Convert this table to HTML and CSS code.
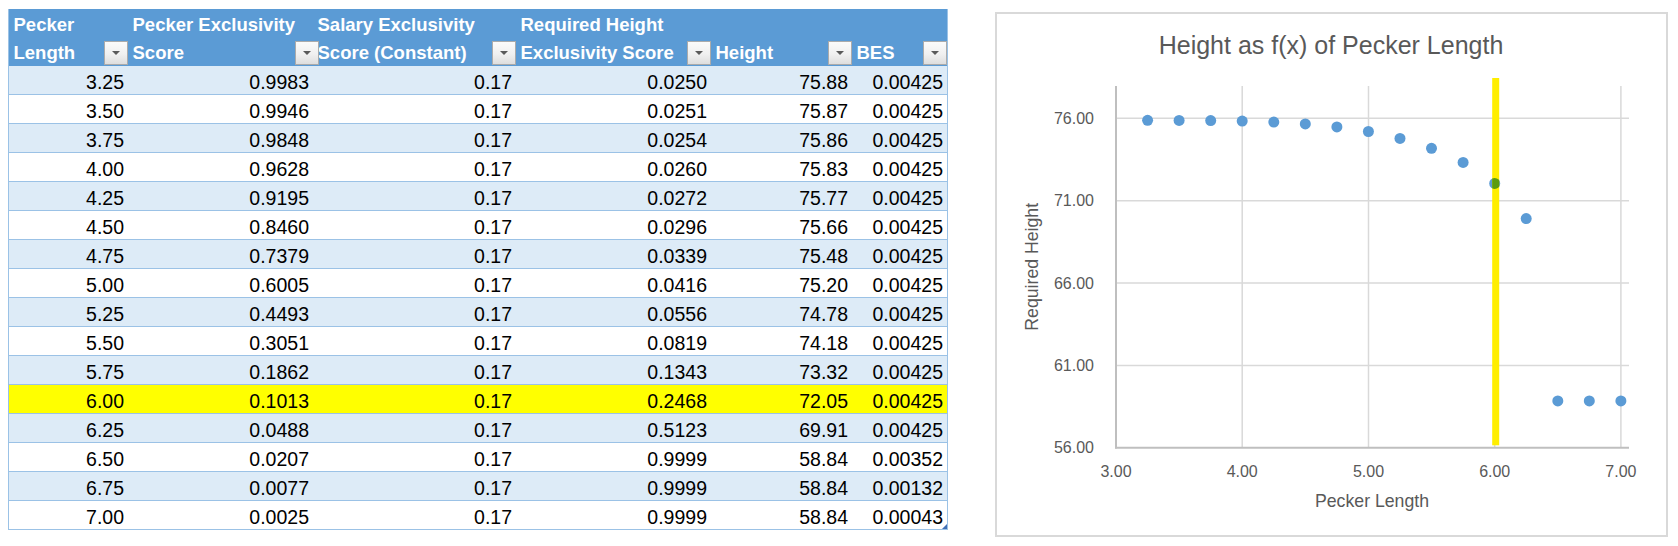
FILE: index.html
```html
<!DOCTYPE html>
<html lang="en">
<head>
<meta charset="utf-8">
<title>Height as f(x) of Pecker Length</title>
<link rel="stylesheet" href="styles.css">
</head>
<body>
<div class="page">
  <div class="sheet">
    <table class="tbl">
      <colgroup>
        <col class="c1"><col class="c2"><col class="c3"><col class="c4"><col class="c5"><col class="c6">
      </colgroup>
      <thead>
        <tr>
          <th><div class="hcell"><span class="hlabel">Pecker<br>Length</span><span class="fbtn"></span></div></th>
          <th><div class="hcell"><span class="hlabel">Pecker Exclusivity<br>Score</span><span class="fbtn"></span></div></th>
          <th><div class="hcell"><span class="hlabel">Salary Exclusivity<br>Score (Constant)</span><span class="fbtn"></span></div></th>
          <th><div class="hcell"><span class="hlabel">Required Height<br>Exclusivity Score</span><span class="fbtn"></span></div></th>
          <th><div class="hcell"><span class="hlabel">Height</span><span class="fbtn"></span></div></th>
          <th><div class="hcell"><span class="hlabel">BES</span><span class="fbtn"></span></div></th>
        </tr>
      </thead>
      <tbody>
        <tr class="band"><td>3.25</td><td>0.9983</td><td>0.17</td><td>0.0250</td><td>75.88</td><td>0.00425</td></tr>
        <tr><td>3.50</td><td>0.9946</td><td>0.17</td><td>0.0251</td><td>75.87</td><td>0.00425</td></tr>
        <tr class="band"><td>3.75</td><td>0.9848</td><td>0.17</td><td>0.0254</td><td>75.86</td><td>0.00425</td></tr>
        <tr><td>4.00</td><td>0.9628</td><td>0.17</td><td>0.0260</td><td>75.83</td><td>0.00425</td></tr>
        <tr class="band"><td>4.25</td><td>0.9195</td><td>0.17</td><td>0.0272</td><td>75.77</td><td>0.00425</td></tr>
        <tr><td>4.50</td><td>0.8460</td><td>0.17</td><td>0.0296</td><td>75.66</td><td>0.00425</td></tr>
        <tr class="band"><td>4.75</td><td>0.7379</td><td>0.17</td><td>0.0339</td><td>75.48</td><td>0.00425</td></tr>
        <tr><td>5.00</td><td>0.6005</td><td>0.17</td><td>0.0416</td><td>75.20</td><td>0.00425</td></tr>
        <tr class="band"><td>5.25</td><td>0.4493</td><td>0.17</td><td>0.0556</td><td>74.78</td><td>0.00425</td></tr>
        <tr><td>5.50</td><td>0.3051</td><td>0.17</td><td>0.0819</td><td>74.18</td><td>0.00425</td></tr>
        <tr class="band"><td>5.75</td><td>0.1862</td><td>0.17</td><td>0.1343</td><td>73.32</td><td>0.00425</td></tr>
        <tr class="hl"><td>6.00</td><td>0.1013</td><td>0.17</td><td>0.2468</td><td>72.05</td><td>0.00425</td></tr>
        <tr class="band"><td>6.25</td><td>0.0488</td><td>0.17</td><td>0.5123</td><td>69.91</td><td>0.00425</td></tr>
        <tr><td>6.50</td><td>0.0207</td><td>0.17</td><td>0.9999</td><td>58.84</td><td>0.00352</td></tr>
        <tr class="band"><td>6.75</td><td>0.0077</td><td>0.17</td><td>0.9999</td><td>58.84</td><td>0.00132</td></tr>
        <tr><td>7.00</td><td>0.0025</td><td>0.17</td><td>0.9999</td><td>58.84</td><td>0.00043</td></tr>
      </tbody>
    </table>
    <span class="handle"></span>
  </div>

  <div class="chart">
    <svg class="plot" width="669" height="521" viewBox="997 14 669 521" xmlns="http://www.w3.org/2000/svg">
      <defs>
        <clipPath id="hlclip"><rect x="1492.2" y="78" width="7" height="367.3"/></clipPath>
      </defs>
      <text class="ctitle" x="1331" y="54.3" text-anchor="middle">Height as f(x) of Pecker Length</text>

      <g class="grid">
        <line x1="1116" y1="118.3" x2="1629" y2="118.3"/>
        <line x1="1116" y1="200.7" x2="1629" y2="200.7"/>
        <line x1="1116" y1="283" x2="1629" y2="283"/>
        <line x1="1116" y1="365.4" x2="1629" y2="365.4"/>
        <line x1="1242.2" y1="86" x2="1242.2" y2="447.7"/>
        <line x1="1368.5" y1="86" x2="1368.5" y2="447.7"/>
        <line x1="1494.7" y1="86" x2="1494.7" y2="447.7"/>
        <line x1="1620.9" y1="86" x2="1620.9" y2="447.7"/>
      </g>
      <g class="axis">
        <line x1="1116" y1="86" x2="1116" y2="448.5"/>
        <line x1="1115" y1="447.7" x2="1629" y2="447.7"/>
      </g>

      <g class="ylab" text-anchor="end">
        <text x="1094" y="124">76.00</text>
        <text x="1094" y="206.4">71.00</text>
        <text x="1094" y="288.7">66.00</text>
        <text x="1094" y="371.1">61.00</text>
        <text x="1094" y="453.4">56.00</text>
      </g>
      <g class="xlab" text-anchor="middle">
        <text x="1116" y="476.7">3.00</text>
        <text x="1242.2" y="476.7">4.00</text>
        <text x="1368.5" y="476.7">5.00</text>
        <text x="1494.7" y="476.7">6.00</text>
        <text x="1620.9" y="476.7">7.00</text>
      </g>
      <text class="atitle" x="1372" y="506.7" text-anchor="middle">Pecker Length</text>
      <text class="atitle" transform="translate(1038 266.8) rotate(-90)" x="0" y="0" text-anchor="middle">Required Height</text>

      <g class="pts">
        <circle cx="1147.6" cy="120.3" r="5.5"/>
        <circle cx="1179.1" cy="120.4" r="5.5"/>
        <circle cx="1210.7" cy="120.6" r="5.5"/>
        <circle cx="1242.2" cy="121.1" r="5.5"/>
        <circle cx="1273.8" cy="122.1" r="5.5"/>
        <circle cx="1305.3" cy="123.9" r="5.5"/>
        <circle cx="1336.9" cy="126.9" r="5.5"/>
        <circle cx="1368.4" cy="131.5" r="5.5"/>
        <circle cx="1400.0" cy="138.4" r="5.5"/>
        <circle cx="1431.5" cy="148.3" r="5.5"/>
        <circle cx="1463.1" cy="162.4" r="5.5"/>
        <circle cx="1494.7" cy="183.4" r="5.5"/>
        <circle cx="1526.2" cy="218.6" r="5.5"/>
        <circle cx="1557.8" cy="400.9" r="5.5"/>
        <circle cx="1589.3" cy="400.9" r="5.5"/>
        <circle cx="1620.9" cy="400.9" r="5.5"/>
      </g>
      <rect class="hline" x="1492.2" y="78" width="7" height="367.3"/>
      <circle class="hpt" cx="1494.7" cy="183.4" r="5.5" clip-path="url(#hlclip)"/>
    </svg>
  </div>
</div>
</body>
</html>
```

FILE: styles.css
```css
html, body {
  margin: 0;
  padding: 0;
  background: #ffffff;
}

body {
  font-family: "Liberation Sans", Arial, sans-serif;
  color: #000000;
}

.page {
  display: flex;
  align-items: flex-start;
  padding: 9px 0 0 8px;
}

/* ---------- spreadsheet table ---------- */
.sheet {
  position: relative;
  width: 940px;
  flex: 0 0 940px;
}

.tbl {
  width: 940px;
  table-layout: fixed;
  border-collapse: separate;
  border-spacing: 0;
  border-left: 1px solid #9bc2e6;
  border-right: 1px solid #9bc2e6;
}

.c1 { width: 119px; }
.c2 { width: 185px; }
.c3 { width: 203px; }
.c4 { width: 195px; }
.c5 { width: 141px; }
.c6 { width: 95px; }

.tbl th {
  padding: 0;
  background: #5b9bd5;
  color: #ffffff;
  font-weight: bold;
  font-size: 18.5px;
  text-align: left;
  vertical-align: bottom;
}

.hcell {
  display: flex;
  justify-content: space-between;
  align-items: flex-end;
  height: 57px;
  padding-left: 4.5px;
}

.hlabel {
  line-height: 28px;
  white-space: nowrap;
  margin-bottom: -0.5px;
}

.fbtn {
  position: relative;
  flex: 0 0 24px;
  width: 24px;
  height: 24px;
  box-sizing: border-box;
  margin-bottom: 1px;
  border: 1px solid #ababab;
  background: linear-gradient(#fbfbfb, #f0f0f0 55%, #dedede);
}

.fbtn::after {
  content: "";
  position: absolute;
  left: 7px;
  top: 9px;
  width: 0;
  height: 0;
  border-left: 4px solid transparent;
  border-right: 4px solid transparent;
  border-top: 4px solid #5a5a5a;
}

.tbl td {
  padding: 4px 4px 0 4px;
  height: 24px;
  line-height: 24px;
  font-size: 19.5px;
  text-align: right;
  white-space: nowrap;
  border-bottom: 1px solid #9bc2e6;
  background: #ffffff;
}

.tbl tr.band td {
  background: #ddebf7;
}

.tbl tr.hl td {
  background: #ffff00;
}

.handle {
  position: absolute;
  right: 1px;
  bottom: 1px;
  width: 0;
  height: 0;
  border-left: 5px solid transparent;
  border-bottom: 5px solid #3f6fb5;
}

/* ---------- chart ---------- */
.chart {
  flex: 0 0 673px;
  width: 673px;
  height: 525px;
  box-sizing: border-box;
  margin: 3px 0 0 47px;
  border: 2px solid #d9d9d9;
  background: #ffffff;
}

.plot {
  display: block;
}

.ctitle {
  font-family: "Liberation Sans", Arial, sans-serif;
  font-size: 25px;
  fill: #595959;
}

.grid line {
  stroke: #d9d9d9;
  stroke-width: 1.5;
}

.axis line {
  stroke: #bfbfbf;
  stroke-width: 2;
}

.ylab text,
.xlab text {
  font-family: "Liberation Sans", Arial, sans-serif;
  font-size: 16px;
  fill: #595959;
}

.atitle {
  font-family: "Liberation Sans", Arial, sans-serif;
  font-size: 17.7px;
  fill: #595959;
}

.pts circle {
  fill: #5b9bd5;
}

.hline {
  fill: #ffee00;
}

.hpt {
  fill: #5b9b10;
}
```
